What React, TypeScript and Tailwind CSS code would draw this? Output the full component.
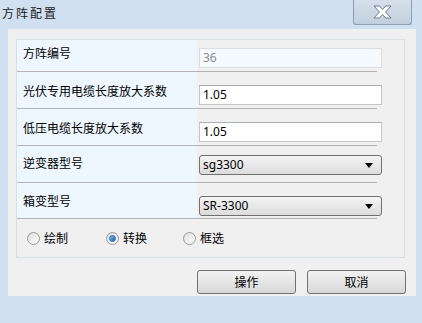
import React from "react";

const cjk = { fontFamily: '"Microsoft YaHei","Noto Sans CJK SC","Noto Sans",sans-serif' };
const lat = { fontFamily: '"Segoe UI","Noto Sans","Noto Sans CJK SC",sans-serif' };

function Radio({ checked, label, w }: { checked?: boolean; label: string; w: string }) {
  return (
    <div className={`flex items-center ${w}`}>
      <div className="w-[13px] h-[13px] rounded-full border border-[#9a9a9a] bg-gradient-to-br from-[#dcdcdc] to-[#ffffff] flex items-center justify-center">
        {checked && (
          <div className="w-[7px] h-[7px] rounded-full bg-gradient-to-br from-[#7cc3f5] to-[#1a5fa8] border border-[#2a6db0]" />
        )}
      </div>
      <span className="ml-[4px] text-[12px] leading-[16px] text-black" style={cjk}>
        {label}
      </span>
    </div>
  );
}

function Select({ value }: { value: string }) {
  return (
    <div className="w-[183px] h-[20px] rounded-[3px] border border-[#707070] bg-gradient-to-b from-[#f4f4f4] to-[#dcdcdc] flex items-center pl-[3px] pr-[8px]">
      <span className="text-[12px] leading-[16px] text-black flex-1" style={lat}>
        {value}
      </span>
      <svg width="8" height="5" viewBox="0 0 8 5">
        <path d="M0 0 L8 0 L4 5 Z" fill="#000" />
      </svg>
    </div>
  );
}

function Input({ value, disabled }: { value: string; disabled?: boolean }) {
  return (
    <div
      className={`w-[183px] h-[20px] border flex items-center pl-[3px] ${
        disabled ? "border-[#dadde2] bg-[#f5faff]" : "border-[#c4c7cc] border-t-[#abadb3] bg-white"
      }`}
    >
      <span className={`text-[12px] leading-[16px] ${disabled ? "text-[#8a8a8a]" : "text-black"}`} style={lat}>
        {value}
      </span>
    </div>
  );
}

function Row({
  label,
  h,
  labelPt,
  ctrlPt,
  children,
}: {
  label: string;
  h: string;
  labelPt: string;
  ctrlPt: string;
  children: React.ReactNode;
}) {
  return (
    <div className="flex flex-col">
      <div className={`flex ${h}`}>
        <div className={`w-[180px] bg-[#eef6ff] pl-[6px] text-[12px] leading-[16px] text-black ${labelPt}`} style={cjk}>
          {label}
        </div>
        <div className={`ml-[2px] ${ctrlPt}`}>{children}</div>
      </div>
      <div className="w-[360px] h-[1px] bg-[#b4b4b4]" />
    </div>
  );
}

export default function App() {
  return (
    <div className="w-[422px] h-[323px] bg-[#d0e0f0] flex flex-col overflow-hidden">
      <div className="h-[29px] flex items-start">
        <div className="pl-[2px] pt-[5px] text-[12px] leading-[16px] tracking-[2px] text-[#1a1a1a]" style={cjk}>
          方阵配置
        </div>
        <div className="ml-auto mr-[10px] w-[59px] h-[25px] border border-[#8d9db3] border-t-0 rounded-b-[3px] bg-gradient-to-b from-[#d6e0ec] to-[#c2cfde] flex items-center justify-center">
          <svg width="19" height="14" viewBox="0 0 19 14">
            <path
              d="M1 1 L6.5 1 L9.5 4.5 L12.5 1 L18 1 L12.5 7 L18 13 L12.5 13 L9.5 9.5 L6.5 13 L1 13 L6.5 7 Z"
              fill="#ffffff"
              stroke="#6c7a8c"
              strokeWidth="1"
              strokeLinejoin="round"
            />
          </svg>
        </div>
      </div>
      <div className="ml-[8px] mr-[6px] h-[267px] bg-[#f0f0f0] pt-[10px] pl-[8px] pr-[11px] flex flex-col">
        <div className="h-[219px] border border-[#d8dfe5] flex flex-col">
          <Row label="方阵编号" h="h-[31px]" labelPt="pt-[5px]" ctrlPt="pt-[8px]">
            <Input value="36" disabled />
          </Row>
          <Row label="光伏专用电缆长度放大系数" h="h-[36px]" labelPt="pt-[11px]" ctrlPt="pt-[13px]">
            <Input value="1.05" />
          </Row>
          <Row label="低压电缆长度放大系数" h="h-[36px]" labelPt="pt-[11px]" ctrlPt="pt-[13px]">
            <Input value="1.05" />
          </Row>
          <Row label="逆变器型号" h="h-[36px]" labelPt="pt-[9px]" ctrlPt="pt-[9px]">
            <Select value="sg3300" />
          </Row>
          <Row label="箱变型号" h="h-[35px]" labelPt="pt-[10px]" ctrlPt="pt-[13px]">
            <Select value="SR-3300" />
          </Row>
          <div className="flex items-center pl-[10px] pt-[11px]">
            <Radio label="绘制" w="w-[79px]" />
            <Radio label="转换" checked w="w-[77px]" />
            <Radio label="框选" w="w-[60px]" />
          </div>
        </div>
        <div className="flex justify-end gap-[11px] mt-[12px] -mr-[1px]">
          <button className="w-[99px] h-[24px] rounded-[3px] border border-[#707070] bg-gradient-to-b from-[#f2f2f2] to-[#d8d8d8] text-[12px] text-black" style={cjk}>
            操作
          </button>
          <button className="w-[99px] h-[24px] rounded-[3px] border border-[#707070] bg-gradient-to-b from-[#f2f2f2] to-[#d8d8d8] text-[12px] text-black" style={cjk}>
            取消
          </button>
        </div>
      </div>
    </div>
  );
}
